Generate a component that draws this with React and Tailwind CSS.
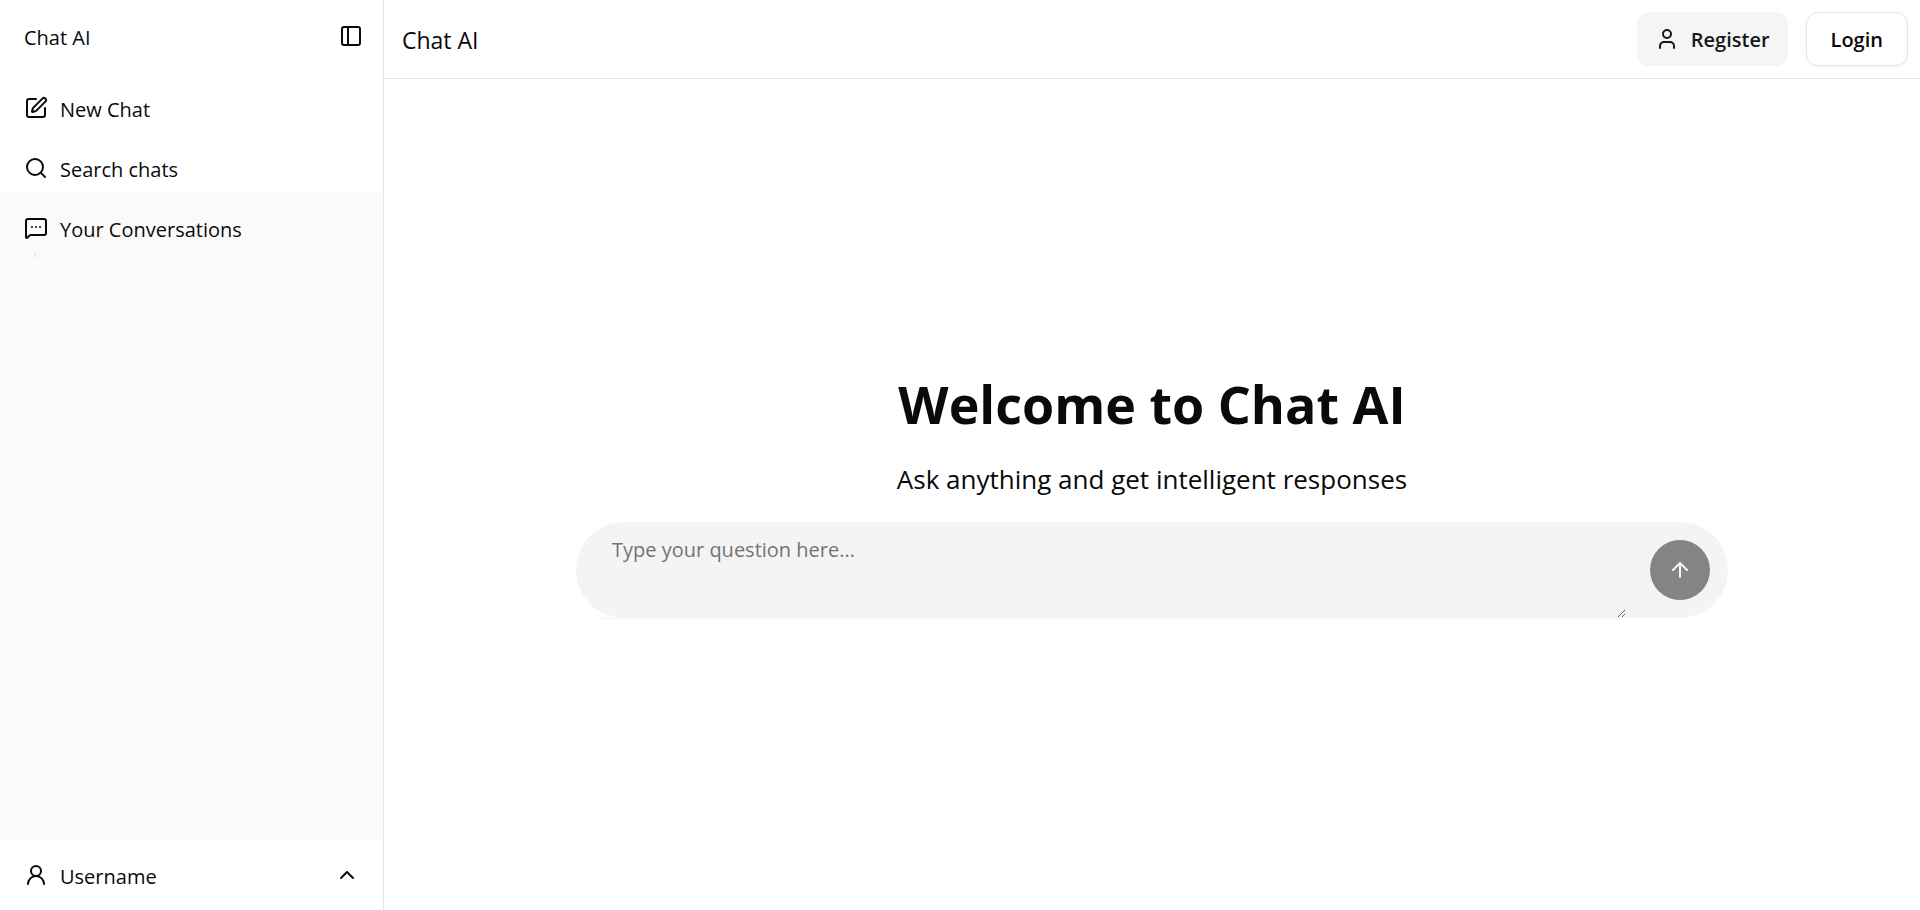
import {
  ArrowUp,
  ChevronUp,
  MessageSquareMore,
  PanelLeft,
  Search,
  SquarePen,
  User,
  UserRound,
} from "lucide-react";

const navItems = [
  { label: "New Chat", Icon: SquarePen },
  { label: "Search chats", Icon: Search },
];

function NavButton({ label, Icon }) {
  return (
    <button
      type="button"
      className="flex h-12 w-full items-center gap-3 rounded-lg px-3 text-left text-xl"
    >
      <Icon className="size-6 shrink-0" />
      <span className="pt-1">{label}</span>
    </button>
  );
}

function Sidebar() {
  return (
    <aside className="flex w-96 shrink-0 flex-col border-r border-neutral-200 bg-neutral-50">
      <div className="flex flex-col gap-3 bg-white px-3">
        <div className="flex h-18 items-center justify-between pr-2 pl-3 text-xl">
          <span className="pt-1">Chat AI</span>
          <button type="button" aria-label="Toggle sidebar">
            <PanelLeft className="size-6" />
          </button>
        </div>
        <nav className="flex flex-col gap-3">
          {navItems.map((item) => (
            <NavButton key={item.label} {...item} />
          ))}
        </nav>
      </div>
      <div className="flex-1 px-3 pt-3">
        <NavButton label="Your Conversations" Icon={MessageSquareMore} />
        <div className="ml-[22px] h-1.5 w-0.5 bg-neutral-200/60" />
      </div>
      <div className="bg-white px-3 pt-3 pb-[11px]">
        <button
          type="button"
          className="flex h-12 w-full items-center gap-3 px-3 text-left text-xl"
        >
          <UserRound className="size-6 shrink-0" />
          <span className="flex-1 pt-1">Username</span>
          <ChevronUp className="size-6" />
        </button>
      </div>
    </aside>
  );
}

function Header() {
  return (
    <header className="flex items-center justify-between border-b border-neutral-200 py-3 pr-3 pl-[18px]">
      <h2 className="pt-0.5 text-[23px]">Chat AI</h2>
      <div className="flex gap-[18px] text-xl font-semibold">
        <button
          type="button"
          className="flex h-[54px] items-center gap-3 rounded-xl bg-neutral-100 px-[18px] text-neutral-900"
        >
          <User className="size-6" />
          <span className="pt-0.5">Register</span>
        </button>
        <button
          type="button"
          className="h-[54px] rounded-xl border border-neutral-200 bg-white px-6 pt-0.5 shadow-xs"
        >
          Login
        </button>
      </div>
    </header>
  );
}

export default function App() {
  return (
    <div className="flex min-h-screen bg-white font-['Open_Sans','Noto_Sans',sans-serif] text-neutral-950">
      <Sidebar />
      <div className="flex min-w-0 flex-1 flex-col">
        <Header />
        <main className="flex flex-1 flex-col items-center justify-center">
          <h1 className="text-[52px] leading-[64px] font-bold">Welcome to Chat AI</h1>
          <p className="mt-6 text-[26px] leading-[38px]">
            Ask anything and get intelligent responses
          </p>
          <form className="mt-6 flex h-24 w-3/4 items-center gap-6 rounded-full bg-gray-100 px-[18px]">
            <textarea
              aria-label="Your question"
              placeholder="Type your question here..."
              className="h-24 flex-1 rounded-xl px-[18px] py-3.5 text-xl shadow-xs outline-none placeholder:text-neutral-500"
            />
            <button
              type="submit"
              aria-label="Send"
              disabled
              className="flex size-[60px] items-center justify-center rounded-full bg-neutral-900 text-neutral-50 opacity-50"
            >
              <ArrowUp className="size-6" />
            </button>
          </form>
        </main>
      </div>
    </div>
  );
}
